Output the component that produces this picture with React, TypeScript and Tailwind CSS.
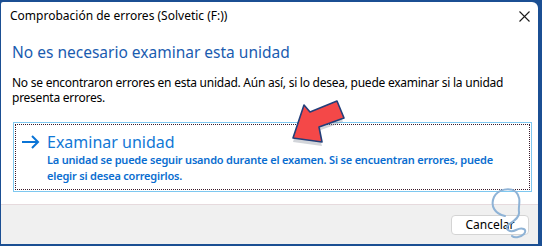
import React from "react";

const font = { fontFamily: '"Segoe UI", "Noto Sans", "Open Sans", sans-serif' };

function CloseIcon() {
  return (
    <svg width="11" height="11" viewBox="0 0 11 11" className="text-[#1a1a1a]">
      <path d="M0.5 0.5 L10.5 10.5 M10.5 0.5 L0.5 10.5" stroke="currentColor" strokeWidth="1.1" />
    </svg>
  );
}

function ArrowRight() {
  return (
    <svg width="19" height="14" viewBox="0 0 19 14" className="text-[#0a74d6] shrink-0">
      <path d="M1 7 H17 M11 1 L17 7 L11 13" stroke="currentColor" strokeWidth="2" fill="none" />
    </svg>
  );
}

// red pointer drawn over the dialog
function RedArrow() {
  return (
    <svg width="62" height="50" viewBox="288 100 62 50" className="absolute left-[288px] top-[100px]">
      <polygon
        points="295,140 305,106 311,113 338,103 345,120 320,129 324,144"
        fill="#7f8794"
        opacity="0.35"
        transform="translate(-2,2)"
      />
      <polygon
        points="293,138 304,105 310,112 337,101 344,118 319,127 322,142"
        fill="#f44848"
        stroke="#233f7a"
        strokeWidth="1.6"
        strokeLinejoin="round"
      />
    </svg>
  );
}

function Scribble() {
  return (
    <svg width="60" height="60" viewBox="480 185 60 60" className="absolute left-[480px] top-[185px]">
      <path
        d="M505 216 C495 214 490 206 494 197 C498 189 510 187 516 192 C522 198 518 206 519 212 C520 218 512 222 508 225 C504 229 510 233 516 230 C522 227 528 229 524 234 C520 238 514 238 512 236"
        stroke="#8fb3d6"
        strokeWidth="2"
        fill="none"
        strokeLinecap="round"
      />
    </svg>
  );
}

export default function App() {
  return (
    <div className="relative w-[542px] h-[246px] bg-[#1b4f93] overflow-hidden" style={font}>
      <div className="pt-[2px] pl-[1px] pr-[4px] h-[244px]">
        <div className="h-full bg-white rounded-tr-[6px] rounded-tl-[2px] flex flex-col overflow-hidden">
          {/* title bar */}
          <div className="flex items-center justify-between h-[28px] pl-[9px] pr-[8px]">
            <span className="text-[12px] text-black">Comprobación de errores (Solvetic (F:))</span>
            <CloseIcon />
          </div>

          <div className="flex-1 pl-[11px] pr-[6px]">
            <div className="mt-[12px] text-[15.5px] leading-[20px] text-[#1a5cb0]">
              No es necesario examinar esta unidad
            </div>
            <p className="mt-[13px] text-[12px] leading-[15px] tracking-[-0.25px] text-black pr-[8px]">
              No se encontraron errores en esta unidad. Aún así, si lo desea, puede examinar si la unidad presenta errores.
            </p>

            {/* command link */}
            <div className="mt-[17px] ml-[1px] h-[70px] border border-[#7ec8f0] p-[1px]">
              <div className="h-full border border-dotted border-[#3a1a2a] flex gap-[7px] pl-[5px] pt-[7px]">
                <div className="pt-[3px]">
                  <ArrowRight />
                </div>
                <div className="flex flex-col">
                  <span className="text-[16px] leading-[20px] text-[#1278d6]">Examinar unidad</span>
                  <span className="text-[11px] leading-[16px] tracking-[-0.2px] font-semibold text-[#0a6dd0] pr-[30px]">
                    La unidad se puede seguir usando durante el examen. Si se encuentran errores, puede elegir si desea corregirlos.
                  </span>
                </div>
              </div>
            </div>
          </div>

          {/* footer */}
          <div className="h-[40px] bg-[#f0f0f0] border-t border-[#e6dadd] flex items-center justify-end pr-[9px]">
            <button className="w-[78px] h-[20px] bg-white border border-[#d4d4d4] rounded-[4px] text-[12px] leading-[18px] text-black">
              Cancelar
            </button>
          </div>
        </div>
      </div>
      <RedArrow />
      <Scribble />
    </div>
  );
}
